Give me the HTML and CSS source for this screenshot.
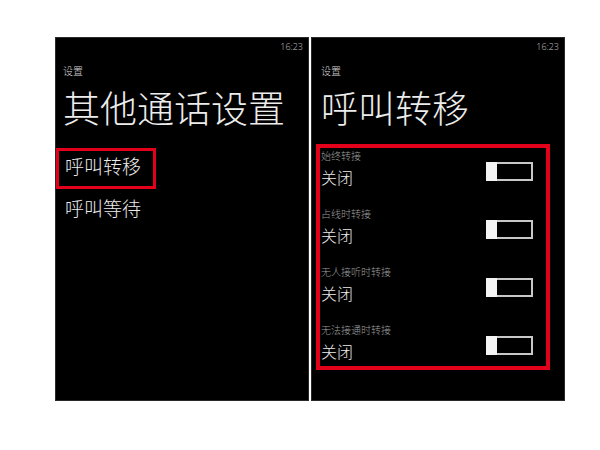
FILE: index.html
```html
<!DOCTYPE html>
<html lang="zh-CN">
<head>
    <meta charset="UTF-8">
    <title>呼叫转移</title>
    <link rel="stylesheet" href="styles.css">
</head>
<body>
    <div class="shots">
        <div class="screen screen-left">
            <div class="status">16:23</div>
            <div class="crumb">设置</div>
            <h1 class="title">其他通话设置</h1>
            <div class="menu">
                <div class="menu-item marked">呼叫转移</div>
                <div class="menu-item">呼叫等待</div>
            </div>
        </div>
        <div class="screen screen-right">
            <div class="status">16:23</div>
            <div class="crumb">设置</div>
            <h1 class="title">呼叫转移</h1>
            <div class="options">
                <div class="option">
                    <div class="option-text">
                        <div class="option-label">始终转接</div>
                        <div class="option-value">关闭</div>
                    </div>
                    <div class="toggle"><span class="knob"></span><span class="track"></span></div>
                </div>
                <div class="option">
                    <div class="option-text">
                        <div class="option-label">占线时转接</div>
                        <div class="option-value">关闭</div>
                    </div>
                    <div class="toggle"><span class="knob"></span><span class="track"></span></div>
                </div>
                <div class="option">
                    <div class="option-text">
                        <div class="option-label">无人接听时转接</div>
                        <div class="option-value">关闭</div>
                    </div>
                    <div class="toggle"><span class="knob"></span><span class="track"></span></div>
                </div>
                <div class="option">
                    <div class="option-text">
                        <div class="option-label">无法接通时转接</div>
                        <div class="option-value">关闭</div>
                    </div>
                    <div class="toggle"><span class="knob"></span><span class="track"></span></div>
                </div>
            </div>
        </div>
    </div>
</body>
</html>
```

FILE: styles.css
```css
body {
    margin: 0;
    background-color: #fff;
    font-family: "Noto Sans CJK SC", "Noto Sans", sans-serif;
}

.shots {
    display: flex;
    gap: 2px;
    padding: 37px 0 0 55px;
}

.screen {
    width: 254px;
    height: 364px;
    box-sizing: border-box;
    background-color: #000;
    color: #ececec;
    border: 1px solid #2a2a2a;
    font-family: "Noto Sans CJK SC Light", "Noto Sans CJK SC", sans-serif;
    font-weight: 300;
}

.screen-left {
    padding-left: 7px;
}

.screen-right {
    padding-left: 9px;
}

.status {
    height: 17px;
    line-height: 17px;
    font-family: "Open Sans", sans-serif;
    font-size: 9px;
    color: #c4c4c4;
    text-align: right;
    padding-right: 5px;
}

.crumb {
    margin-top: 10px;
    font-size: 10px;
    line-height: 12px;
    color: #d8d8d8;
}

.title {
    margin: 10px 0 0;
    font-size: 37px;
    line-height: 40px;
    font-weight: 300;
}

/* left screen list */
.menu {
    margin: 21px 0 0 -7px;
}

.menu-item {
    font-size: 19px;
    line-height: 30px;
    padding-left: 9px;
    margin-top: 4px;
}

.menu-item.marked {
    width: 100px;
    box-sizing: border-box;
    border: 3px solid #e3001b;
    padding: 0 0 5px 6px;
    margin-top: 0;
}

/* right screen options */
.options {
    margin: 17px 0 0 -5px;
    width: 234px;
    box-sizing: border-box;
    border: 4px solid #e3001b;
    padding: 2px 0 4px 1px;
}

.option {
    display: flex;
    justify-content: space-between;
    align-items: flex-start;
    margin-bottom: 20px;
}

.option:last-child {
    margin-bottom: 0;
}

.option-label {
    font-size: 10px;
    line-height: 12px;
    color: #9c9c9c;
}

.option-value {
    margin-top: 4px;
    font-size: 16px;
    line-height: 22px;
}

.toggle {
    display: flex;
    margin: 12px 13px 0 0;
}

.knob {
    width: 11px;
    height: 19px;
    background-color: #f4f4f4;
}

.track {
    width: 36px;
    height: 19px;
    box-sizing: border-box;
    border: 2px solid #c8c8c8;
    border-left: none;
}
```
